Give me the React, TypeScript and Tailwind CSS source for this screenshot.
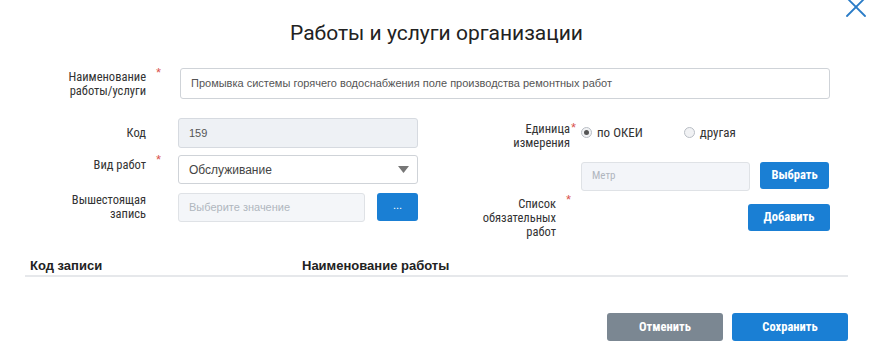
import { X } from 'lucide-react';

const narrow = "font-['Liberation_Sans_Narrow','Roboto_Condensed','Liberation_Sans',sans-serif]";
const arial = "font-['Liberation_Sans',Arial,sans-serif]";

function Star({ className = '' }: { className?: string }) {
	return <span className={`block text-[13px] leading-none text-[#d9534f] ${className}`}>*</span>;
}

function Radio({ checked, label }: { checked?: boolean; label: string }) {
	return (
		<label className="flex items-center gap-[5px]">
			<span className="flex h-[11px] w-[11px] items-center justify-center rounded-full border border-[#b9bec5] bg-[#f1f2f4]">
				{checked && <span className="h-[5px] w-[5px] rounded-full bg-[#555]" />}
			</span>
			<span className={`${narrow} text-[13px] text-[#333]`}>{label}</span>
		</label>
	);
}

export default function App() {
	return (
		<div className={`relative h-[349px] w-[873px] overflow-hidden bg-white text-[#333] ${arial}`}>
			<button className="absolute left-[838px] top-[-11px] text-[#2a7cc7]">
				<X className="h-[36px] w-[36px]" strokeWidth={1.2} />
			</button>

			<h2 className="pt-[19px] text-center text-[21px] leading-[28px] text-[#222] font-['Roboto','Liberation_Sans',sans-serif]">
				Работы и услуги организации
			</h2>

			{/* наименование */}
			<div className="mt-[21px] flex items-center">
				<div className={`w-[146px] text-right text-[12.5px] leading-[14px] ${narrow}`}>
					Наименование<br />работы/услуги
				</div>
				<div className="flex w-[34px] self-start pl-[10px]">
					<Star className="-mt-[2px]" />
				</div>
				<div className="flex h-[31px] w-[650px] items-center rounded-[3px] border border-[#cfd3d8] bg-white px-[10px] text-[11px] text-[#555]">
					Промывка системы горячего водоснабжения поле производства ремонтных работ
				</div>
			</div>

			<div className="mt-[19px] flex">
				{/* left column */}
				<div className="flex w-[418px] flex-col">
					<div className="flex h-[30px] items-center">
						<div className={`w-[146px] text-right text-[12.5px] ${narrow}`}>Код</div>
						<div className="w-[32px]" />
						<div className="flex h-[30px] w-[240px] items-center rounded-[3px] border border-[#d6dae0] bg-[#eef1f5] px-[10px] text-[11px] text-[#555]">
							159
						</div>
					</div>
					<div className="mt-[7px] flex h-[29px] items-center">
						<div className={`w-[146px] self-start pt-[1px] text-right text-[12.5px] ${narrow}`}>Вид работ</div>
						<div className="w-[32px] self-start pl-[10px]">
							<Star className="-mt-[2px]" />
						</div>
						<div className="flex h-[29px] w-[240px] items-center justify-between rounded-[3px] border border-[#cfd3d8] bg-white pl-[10px] pr-[8px] text-[12px] text-[#444]">
							Обслуживание
							<svg width="11" height="7" viewBox="0 0 11 7">
								<path d="M0 0h11L5.5 7z" fill="#777" />
							</svg>
						</div>
					</div>
					<div className="mt-[9px] flex items-start">
						<div className={`w-[146px] text-right text-[12.5px] leading-[14px] ${narrow}`}>
							Вышестоящая<br />запись
						</div>
						<div className="w-[32px]" />
						<div className="flex h-[29px] w-[187px] items-center rounded-[3px] border border-[#dfe2e6] bg-[#f4f6f9] px-[10px] text-[11px] text-[#b0b6be]">
							Выберите значение
						</div>
						<button className="ml-[12px] flex h-[28px] w-[41px] items-center justify-center rounded-[3px] bg-[#1a7fd4] pb-[4px] text-[11px] text-white">
							...
						</button>
					</div>
				</div>

				{/* right column */}
				<div className="flex w-[412px] flex-col">
					<div className="mt-[4px] flex items-start">
						<div className={`w-[152px] text-right text-[12.5px] leading-[14px] ${narrow}`}>
							Единица<br />измерения
						</div>
						<div className="w-[11px] pl-[1px]">
							<Star className="-mt-[1px]" />
						</div>
						<div className="flex gap-[41px] pt-[1px]">
							<Radio checked label="по ОКЕИ" />
							<Radio label="другая" />
						</div>
					</div>
					<div className="ml-[163px] mt-[12px] flex items-start">
						<div className={`flex h-[29px] w-[169px] items-center rounded-[3px] border border-[#dfe2e6] bg-[#f3f5f9] px-[10px] text-[11px] text-[#b0b6be] ${narrow}`}>
							Метр
						</div>
						<button className={`ml-[10px] h-[27px] w-[69px] rounded-[3px] bg-[#1a7fd4] text-[12.5px] font-bold text-white ${narrow}`}>
							Выбрать
						</button>
					</div>
					<div className="mt-[6px] flex items-start">
						<div className={`w-[138px] text-right text-[12.5px] leading-[14px] ${narrow}`}>
							Список<br />обязательных<br />работ
						</div>
						<div className="w-[20px] pl-[10px]">
							<Star className="-mt-[4px]" />
						</div>
						<button className={`ml-auto mt-[7px] h-[27px] w-[82px] rounded-[3px] bg-[#1a7fd4] text-[12.5px] font-bold text-white ${narrow}`}>
							Добавить
						</button>
					</div>
				</div>
			</div>

			{/* table header */}
			<div className="mx-[25px] mt-[17px] flex h-[21px] items-start border-b-2 border-[#e6e8eb] text-[13px] font-bold text-[#222]">
				<div className="w-[277px] pl-[5px]">Код записи</div>
				<div>Наименование работы</div>
			</div>

			<div className="mr-[25px] mt-[36px] flex justify-end gap-[9px]">
				<button className={`h-[28px] w-[116px] rounded-[3px] bg-[#7b8792] text-[12.5px] font-bold text-white ${narrow}`}>
					Отменить
				</button>
				<button className={`h-[28px] w-[116px] rounded-[3px] bg-[#1a7fd4] text-[12.5px] font-bold text-white ${narrow}`}>
					Сохранить
				</button>
			</div>
		</div>
	);
}
